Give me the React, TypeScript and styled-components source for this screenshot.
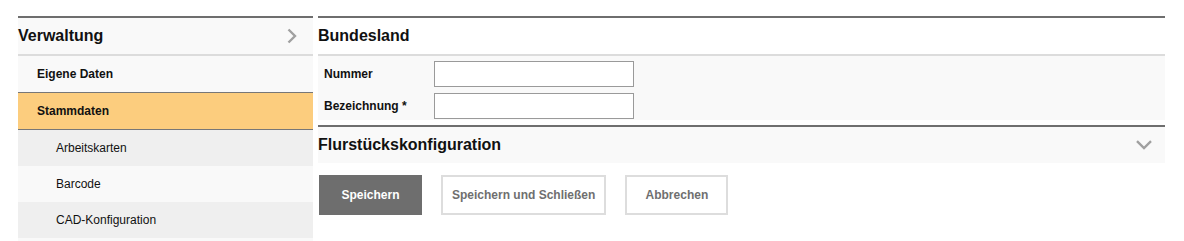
import * as React from 'react';
import styled, { createGlobalStyle } from 'styled-components';

const GlobalStyle = createGlobalStyle`
  html, body {
    margin: 0;
    padding: 0;
    background: #ffffff;
    font-family: 'Liberation Sans', Arial, sans-serif;
    color: #111111;
  }
  * { box-sizing: border-box; }
`;

const navItems = [
  { label: 'Eigene Daten', level: 1, active: false },
  { label: 'Stammdaten', level: 1, active: true },
  { label: 'Arbeitskarten', level: 2, shade: 'dark' },
  { label: 'Barcode', level: 2, shade: 'light' },
  { label: 'CAD-Konfiguration', level: 2, shade: 'dark' },
];

function ChevronRight() {
  return (
    <svg width='10' height='16' viewBox='0 0 10 16'>
      <polyline points='1.5,1.5 8,8 1.5,14.5' fill='none' stroke='#a0a0a0' strokeWidth='2.4' />
    </svg>
  );
}

function ChevronDown() {
  return (
    <svg width='16' height='10' viewBox='0 0 16 10'>
      <polyline points='1,1.2 8,8 15,1.2' fill='none' stroke='#a0a0a0' strokeWidth='2.4' />
    </svg>
  );
}

function App() {
  return (
    <Page>
      <GlobalStyle />
      <Sidebar>
        <SideHeader>
          <span>Verwaltung</span>
          <ChevronRight />
        </SideHeader>
        {navItems.map((item) => (
          <NavItem
            key={item.label}
            $level={item.level}
            $active={!!item.active}
            $shade={item.shade}
          >
            {item.label}
          </NavItem>
        ))}
        <NavTail />
      </Sidebar>
      <Main>
        <Panel>
          <PanelHeader>Bundesland</PanelHeader>
          <Form>
            <FieldRow>
              <Label>Nummer</Label>
              <Input />
            </FieldRow>
            <FieldRow>
              <Label>Bezeichnung *</Label>
              <Input />
            </FieldRow>
          </Form>
        </Panel>
        <Panel>
          <CollapsedHeader>
            <span>Flurstückskonfiguration</span>
            <ChevronDown />
          </CollapsedHeader>
        </Panel>
        <Actions>
          <Button $primary>Speichern</Button>
          <Button>Speichern und Schließen</Button>
          <Button>Abbrechen</Button>
        </Actions>
      </Main>
    </Page>
  );
}

const Page = styled.div`
  display: flex;
  gap: 5px;
  padding: 16px 0 0 18px;
  width: 1184px;
  height: 241px;
  overflow: hidden;
`;

const Sidebar = styled.nav`
  width: 295px;
  flex: none;
  border-top: 2px solid #6e6e6e;
  background: #f9f9f9;
`;

const SideHeader = styled.div`
  height: 38px;
  display: flex;
  align-items: center;
  justify-content: space-between;
  padding-right: 16px;
  font-size: 16px;
  font-weight: bold;
  border-bottom: 2px solid #dcdcdc;
  svg { display: block; }
`;

const NavItem = styled.div<{ $level: number; $active: boolean; $shade?: string }>`
  height: ${(p) => (p.$active ? '38px' : '36px')};
  display: flex;
  align-items: center;
  padding-left: ${(p) => (p.$level === 1 ? '19px' : '38px')};
  font-size: 12px;
  font-weight: ${(p) => (p.$level === 1 ? 'bold' : 'normal')};
  background: ${(p) =>
    p.$active ? '#fccd7e' : p.$shade === 'dark' ? '#efefef' : '#f9f9f9'};
  border-top: ${(p) => (p.$active ? '1px solid #777777' : 'none')};
  border-bottom: ${(p) => (p.$active ? '1px solid #777777' : 'none')};
`;

const NavTail = styled.div`
  height: 10px;
  background: #f9f9f9;
`;

const Main = styled.main`
  width: 847px;
  flex: none;
  display: flex;
  flex-direction: column;
`;

const Panel = styled.section`
  border-top: 2px solid #6e6e6e;
  & + & {
    margin-top: 5px;
  }
`;

const PanelHeader = styled.h2`
  margin: 0;
  height: 38px;
  display: flex;
  align-items: center;
  font-size: 16px;
  font-weight: bold;
  border-bottom: 2px solid #dcdcdc;
`;

const CollapsedHeader = styled.h2`
  margin: 0;
  height: 36px;
  display: flex;
  align-items: center;
  justify-content: space-between;
  padding-right: 13px;
  font-size: 16px;
  font-weight: bold;
  background: #f9f9f9;
  svg { display: block; }
`;

const Form = styled.div`
  background: #f9f9f9;
  padding: 5px 0 1px 6px;
  display: flex;
  flex-direction: column;
  gap: 6px;
`;

const FieldRow = styled.div`
  display: flex;
  align-items: center;
`;

const Label = styled.label`
  width: 110px;
  font-size: 12px;
  font-weight: bold;
`;

const Input = styled.input`
  width: 200px;
  height: 26px;
  margin: 0;
  border: 1px solid #9a9a9a;
  background: #ffffff;
  font: inherit;
`;

const Actions = styled.div`
  display: flex;
  gap: 19px;
  margin-top: 12px;
  padding-left: 1px;
`;

const Button = styled.button<{ $primary?: boolean }>`
  height: 40px;
  min-width: 103px;
  padding: 0 9px;
  font-family: 'Liberation Sans', Arial, sans-serif;
  font-size: 12px;
  font-weight: bold;
  color: ${(p) => (p.$primary ? '#ffffff' : '#6f6f6f')};
  background: ${(p) => (p.$primary ? '#6e6e6e' : '#ffffff')};
  border: 2px solid ${(p) => (p.$primary ? '#6e6e6e' : '#dddddd')};
  cursor: pointer;
`;

export default App;
